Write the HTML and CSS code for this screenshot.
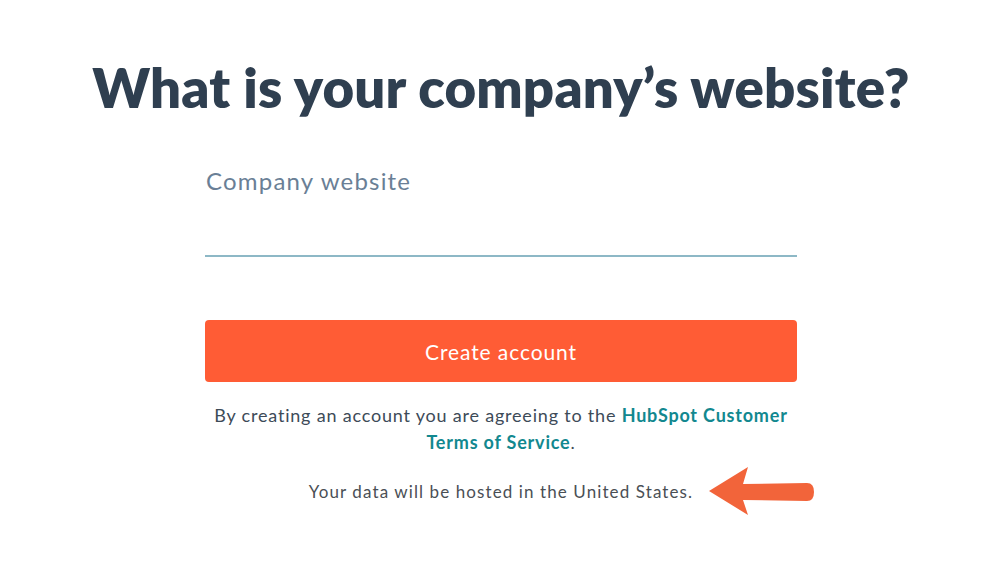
FILE: index.html
```html
<!DOCTYPE html>
<html lang="en">
<head>
    <meta charset="UTF-8">
    <meta name="viewport" content="width=device-width, initial-scale=1.0">
    <title>Company website</title>
    <link rel="stylesheet" href="styles.css">
</head>
<body>
    <div class="signup">
        <h1 class="title">What is your company’s website?</h1>

        <form class="form">
            <label class="field">
                <span class="field-label">Company website</span>
                <input class="field-input" type="text">
            </label>

            <button class="btn-primary" type="button">Create account</button>

            <p class="terms">
                By creating an account you are agreeing to the <a href="#">HubSpot Customer</a><br>
                <a href="#">Terms of Service</a>.
            </p>

            <div class="hosting">
                <span class="hosting-text">Your data will be hosted in the United States.</span>
                <svg class="arrow" width="110" height="52" viewBox="0 0 110 52">
                    <path d="M2 26 L41 2 L36 19 L100 18 Q107 18 107 27 Q107 36 100 36 L36 35 L41 50 Z" fill="#f2643a"/>
                </svg>
            </div>
        </form>
    </div>
</body>
</html>
```

FILE: styles.css
```css
body {
    margin: 0;
    background: #fff;
    font-family: Lato, "Open Sans", sans-serif;
    color: #33475b;
}

.signup {
    display: flex;
    flex-direction: column;
    align-items: center;
    padding: 54px 0 0 16px;
}

.title {
    margin: 0;
    font-size: 54.5px;
    font-weight: 800;
    letter-spacing: 0.2px;
    color: #2f3f50;
}

.form {
    width: 592px;
    margin-top: 46px;
    display: flex;
    flex-direction: column;
}

.field {
    display: flex;
    flex-direction: column;
}

.field-label {
    font-size: 24px;
    letter-spacing: 1.2px;
    color: #6a7f96;
    padding-left: 1px;
}

.field-input {
    border: none;
    border-bottom: 2px solid #8db8c6;
    height: 58px;
    outline: none;
    font-size: 20px;
    background: transparent;
}

.btn-primary {
    margin-top: 63px;
    height: 62px;
    border: none;
    border-radius: 4px;
    background: #ff5c35;
    color: #fff;
    font-family: Lato, sans-serif;
    font-size: 21px;
    letter-spacing: 0.9px;
}

.terms {
    margin: 20px 0 0;
    text-align: center;
    font-size: 18px;
    letter-spacing: 0.8px;
    line-height: 27px;
    color: #3d4b58;
}

.terms a {
    color: #12888f;
    font-weight: 700;
    text-decoration: none;
}

.hosting {
    display: grid;
    grid-template-columns: minmax(0, 1fr) auto minmax(0, 1fr);
    align-items: center;
    margin-top: 9px;
    font-size: 17px;
    letter-spacing: 1.1px;
    color: #4a4f55;
}

.hosting-text {
    grid-column: 2;
}

.arrow {
    grid-column: 3;
    display: block;
    margin-left: 14px;
}
```
